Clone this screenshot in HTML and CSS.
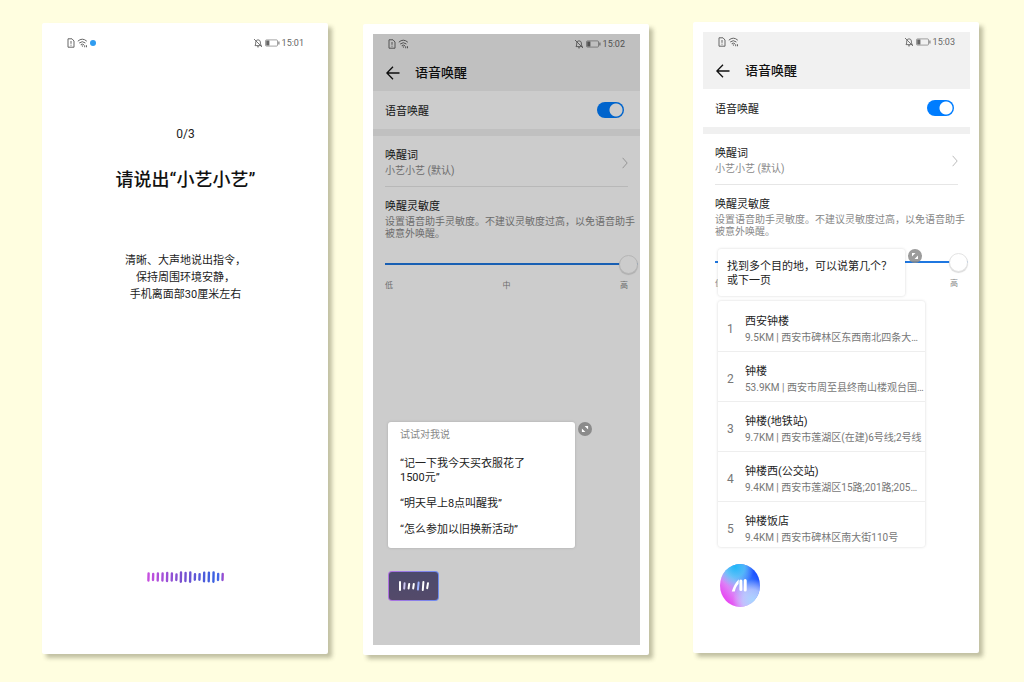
FILE: index.html
```html
<!DOCTYPE html>
<html lang="zh-CN">
<head>
<meta charset="utf-8">
<title>语音唤醒</title>
<link rel="stylesheet" href="styles.css">
</head>
<body>
<svg class="defs" aria-hidden="true">
  <defs>
    <symbol id="sim" viewBox="0 0 8 10"><path d="M1 .8h4L7 3v6.2H1z" fill="none" stroke="currentColor"/><path d="M4 3v2.8M4 6.7v1" stroke="currentColor"/></symbol>
    <symbol id="wifi" viewBox="0 0 11 10"><path d="M.8 3.2Q5.3-.8 9.8 3.2M2.2 5Q5.3 2.4 8.4 5M3.7 6.7Q5.3 5.4 6.9 6.7" fill="none" stroke="currentColor"/><path d="M4.4 7.6h2L5.4 9zM7.2 7.2h1v2h-1zM9 7.2h1v2H9z" fill="currentColor"/></symbol>
    <symbol id="mute" viewBox="0 0 10 10"><path d="M2 7.6h6.4L7.4 6V4Q7.2 1.9 5 1.8 2.8 2 2.7 4v2zM4 8.8h2M1 1l8 8" fill="none" stroke="currentColor" stroke-width=".9"/></symbol>
    <symbol id="battery" viewBox="0 0 15 8"><rect x=".5" y=".9" width="12" height="6.2" rx="1" fill="none" stroke="currentColor" stroke-width=".6"/><path d="M1.2 1.5h3.2v5H1.2zM13.4 2.4h1v3.2h-1z" fill="currentColor"/></symbol>
    <symbol id="back" viewBox="0 0 14 14"><path d="M13.5 7H1M7 .8L.9 7 7 13.2" fill="none" stroke="currentColor" stroke-width="1.3"/></symbol>
    <symbol id="expand" viewBox="0 0 14 14"><circle cx="7" cy="7" r="7" fill="#8b8b8b"/><path d="M6.6 4h3.5v3.5zM7.4 10H3.9V6.5z" fill="#fff"/><path d="M4.6 4.6l4.8 4.8" stroke="#8b8b8b" stroke-width=".8"/></symbol>
    <linearGradient id="spectrum" gradientUnits="userSpaceOnUse" x1="0" y1="0" x2="77" y2="0"><stop offset="0" stop-color="#c94fe0"/><stop offset=".45" stop-color="#7a50d0"/><stop offset=".85" stop-color="#3c60e0"/><stop offset=".94" stop-color="#4668e8"/><stop offset="1" stop-color="#b045c8"/></linearGradient>
    <linearGradient id="orb-base" x1=".85" y1=".2" x2=".1" y2=".85"><stop offset="0" stop-color="#1d52ff"/><stop offset=".25" stop-color="#3a7cff"/><stop offset=".5" stop-color="#a3a8fa"/><stop offset=".72" stop-color="#dd80f6"/><stop offset="1" stop-color="#ea3df2"/></linearGradient>
    <radialGradient id="orb-cyan" cx=".38" cy=".06" r=".48"><stop offset="0" stop-color="#20b8f8"/><stop offset=".5" stop-color="#58c8f8" stop-opacity=".8"/><stop offset="1" stop-color="#8ccdfa" stop-opacity="0"/></radialGradient>
    <radialGradient id="orb-glow" cx=".82" cy=".85" r=".5"><stop offset="0" stop-color="#a8d4ff"/><stop offset=".5" stop-color="#c0ccff" stop-opacity=".8"/><stop offset="1" stop-color="#d0c8ff" stop-opacity="0"/></radialGradient>
  </defs>
</svg>

<main class="stage">
  <section class="panel panel-first">
    <div class="screen">
      <div class="status">
        <svg class="i-sim"><use href="#sim"/></svg>
        <svg class="i-wifi"><use href="#wifi"/></svg>
        <span class="dot"></span>
        <svg class="i-mute"><use href="#mute"/></svg>
        <svg class="i-battery"><use href="#battery"/></svg>
        <time>15:01</time>
      </div>
      <div class="training">
        <p class="progress">0/3</p>
        <h1 class="prompt">请说出“小艺小艺”</h1>
        <p class="advice">清晰、大声地说出指令，<br>保持周围环境安静，<br>手机离面部30厘米左右</p>
      </div>
      <svg class="wave" viewBox="0 0 77 12" fill="none" stroke="url(#spectrum)" stroke-width="2.4" stroke-linecap="round">
        <path d="M1.6 2.5l-.2 7M6.2 3l-.2 6M10.9 2.5l-.2 7M15.6 2.5l-.2 7M20.2 2l-.2 8M24.9 2.5l-.2 7M29.5 3.5l-.2 5.5M34 1.4l-.2 9.4M38.6 2l-.2 8M43.3 1.4l-.2 9.4M48 3.2l-.2 5.6M52.6 3.2l-.2 5.6M57.2 1.8l-.2 8.4M61.9 1.8l-.2 8.4M66.6 1.4l-.2 9.4M71.2 3l-.2 6M75.7 3l-.2 6"/>
      </svg>
    </div>
  </section>

  <section class="panel panel-second">
    <div class="screen dimmed">
      <header class="top">
        <div class="status">
          <svg class="i-sim"><use href="#sim"/></svg>
          <svg class="i-wifi"><use href="#wifi"/></svg>
          <svg class="i-mute"><use href="#mute"/></svg>
          <svg class="i-battery"><use href="#battery"/></svg>
          <time>15:02</time>
        </div>
        <div class="titlebar">
          <button class="back" aria-label="返回"><svg><use href="#back"/></svg></button>
          <h2>语音唤醒</h2>
        </div>
      </header>
      <div class="toggle-row">
        <label for="wake-a">语音唤醒</label>
        <input class="switch" type="checkbox" id="wake-a" checked>
      </div>
      <div class="settings">
        <a class="entry" href="#word">
          <span><strong>唤醒词</strong><small>小艺小艺 (默认)</small></span>
          <svg class="chevron" viewBox="0 0 6 12"><path d="M.6.8L5.2 6 .6 11.2" fill="none" stroke="#bbb"/></svg>
        </a>
        <label class="sense" for="sense-a"><strong>唤醒灵敏度</strong><small>设置语音助手灵敏度。不建议灵敏度过高，以免语音助手被意外唤醒。</small></label>
        <input class="slider" type="range" id="sense-a" min="0" max="2" value="2">
        <div class="scale"><span>低</span><span>中</span><span>高</span></div>
      </div>
      <aside class="assistant listening">
        <div class="bubble-row">
          <div class="bubble tips">
            <p class="hint">试试对我说</p>
            <p>“记一下我今天买衣服花了<br>1500元”</p>
            <p>“明天早上8点叫醒我”</p>
            <p>“怎么参加以旧换新活动”</p>
          </div>
          <button class="expand" aria-label="展开"><svg><use href="#expand"/></svg></button>
        </div>
        <button class="chip" aria-label="正在聆听">
          <svg viewBox="0 0 32 12" fill="none" stroke="#fff" stroke-width="2" stroke-linecap="round"><path d="M2 2v8M11.2 4l-.6 4.4M15.8 4l-.6 4.4M25.4 2l-.6 8M30 3.2l-.8 5"/><path d="M6.6 3.2l-.4 5.4" stroke="#c9c4f0"/><path d="M20.6 2.6l-.7 7" stroke="#9fb4ff"/></svg>
        </button>
      </aside>
    </div>
  </section>

  <section class="panel panel-third">
    <div class="screen">
      <header class="top">
        <div class="status">
          <svg class="i-sim"><use href="#sim"/></svg>
          <svg class="i-wifi"><use href="#wifi"/></svg>
          <svg class="i-mute"><use href="#mute"/></svg>
          <svg class="i-battery"><use href="#battery"/></svg>
          <time>15:03</time>
        </div>
        <div class="titlebar">
          <button class="back" aria-label="返回"><svg><use href="#back"/></svg></button>
          <h2>语音唤醒</h2>
        </div>
      </header>
      <div class="toggle-row">
        <label for="wake-b">语音唤醒</label>
        <input class="switch" type="checkbox" id="wake-b" checked>
      </div>
      <div class="settings">
        <a class="entry" href="#word">
          <span><strong>唤醒词</strong><small>小艺小艺 (默认)</small></span>
          <svg class="chevron" viewBox="0 0 6 12"><path d="M.6.8L5.2 6 .6 11.2" fill="none" stroke="#bbb"/></svg>
        </a>
        <label class="sense" for="sense-b"><strong>唤醒灵敏度</strong><small>设置语音助手灵敏度。不建议灵敏度过高，以免语音助手被意外唤醒。</small></label>
        <input class="slider" type="range" id="sense-b" min="0" max="2" value="2">
        <div class="scale"><span>低</span><span></span><span>高</span></div>
      </div>
      <aside class="assistant results">
        <div class="bubble-row">
          <p class="bubble question">找到多个目的地，可以说第几个？<br>或下一页</p>
          <button class="expand faded" aria-label="展开"><svg><use href="#expand"/></svg></button>
        </div>
        <ol class="places">
          <li><span class="num">1</span><div><strong>西安钟楼</strong><small>9.5KM | 西安市碑林区东西南北四条大…</small></div></li>
          <li><span class="num">2</span><div><strong>钟楼</strong><small>53.9KM | 西安市周至县终南山楼观台国…</small></div></li>
          <li><span class="num">3</span><div><strong>钟楼(地铁站)</strong><small>9.7KM | 西安市莲湖区(在建)6号线;2号线</small></div></li>
          <li><span class="num">4</span><div><strong>钟楼西(公交站)</strong><small>9.4KM | 西安市莲湖区15路;201路;205…</small></div></li>
          <li><span class="num">5</span><div><strong>钟楼饭店</strong><small>9.4KM | 西安市碑林区南大街110号</small></div></li>
        </ol>
        <button class="orb" aria-label="语音助手">
          <svg viewBox="0 0 40 43">
            <ellipse cx="20" cy="21.5" rx="20" ry="21.5" fill="url(#orb-base)"/>
            <ellipse cx="20" cy="21.5" rx="20" ry="21.5" fill="url(#orb-glow)"/>
            <ellipse cx="20" cy="21.5" rx="20" ry="21.5" fill="url(#orb-cyan)"/>
            <path d="M11.8 27.5Q14 20 18.8 15.2L18.6 20Q16 22 14.8 27.5z" fill="#fff"/>
            <path d="M20.9 17v8.5M25.2 16.5v9.5" stroke="#fff" stroke-width="3" stroke-linecap="round"/>
          </svg>
        </button>
      </aside>
    </div>
  </section>
</main>
</body>
</html>
```
FILE: styles.css
```css
* {
  box-sizing: border-box;
}

body {
  margin: 0;
  background: #fffee0;
  color: #222;
  font: 11px/14px Roboto, "Noto Sans CJK SC", sans-serif;
}

h1, h2, p, ol {
  margin: 0;
  padding: 0;
}

button {
  padding: 0;
  border: 0;
  background: none;
  color: inherit;
}

svg {
  display: block;
}

.defs {
  position: absolute;
  width: 0;
  height: 0;
}

.stage {
  display: flex;
  min-height: 100vh;
  padding: 0 45px 0 42px;
}

/* Framed phone screens */
.panel {
  display: flex;
  flex: 1;
  min-width: 0;
  padding: 10px 9px 10px 10px;
  border-radius: 2px;
  background: #fff;
  box-shadow: 4px 4px 4px rgba(60, 60, 30, .32);
}

.panel-first {
  margin: 23px 0 28px;
}

.panel-second {
  margin: 24px 0 27px 35px;
}

.panel-third {
  margin: 22px 0 29px 44px;
}

.screen {
  position: relative;
  display: flex;
  flex: 1;
  flex-direction: column;
  min-width: 0;
}

.dimmed::after {
  content: "";
  position: absolute;
  inset: 0;
  background: rgba(0, 0, 0, .2);
  pointer-events: none;
}

.status {
  display: flex;
  align-items: center;
  gap: 2px;
  height: 20px;
  padding: 0 15px 0 15px;
  color: #666;
  font-size: 9px;
}

.i-sim {
  width: 8px;
  height: 10px;
}

.i-wifi {
  width: 11px;
  height: 10px;
}

.dot {
  width: 6px;
  height: 6px;
  border-radius: 50%;
  background: #2f9cf0;
}

.i-mute {
  width: 10px;
  height: 10px;
  margin-left: auto;
}

.i-battery {
  width: 15px;
  height: 8px;
}

/* Voice training */
.training {
  padding-top: 72px;
  text-align: center;
}

.progress {
  font-size: 12px;
  line-height: 18px;
}

.prompt {
  margin-top: 24px;
  color: #111;
  font-size: 18px;
  font-weight: 500;
  line-height: 26px;
}

.advice {
  margin-top: 59px;
  line-height: 17px;
}

.wave {
  width: 77px;
  height: 12px;
  margin: auto auto 61px;
}

/* Settings */
.top {
  background: #f1f1f1;
}

.titlebar {
  display: flex;
  align-items: center;
  gap: 15px;
  height: 37px;
  padding: 0 13px;
  color: #111;
}

.back svg {
  width: 14px;
  height: 14px;
}

.titlebar h2 {
  font-size: 13px;
  font-weight: 500;
  line-height: 18px;
}

.toggle-row {
  display: flex;
  align-items: center;
  justify-content: space-between;
  height: 45px;
  padding: 0 16px 0 12px;
  border-bottom: 7px solid #f0f0f0;
}

.toggle-row label {
  padding-top: 3px;
}

.switch {
  width: 27px;
  height: 16px;
  margin: 0;
  border-radius: 8px;
  appearance: none;
  background: radial-gradient(circle at 19px 8px, #fff 6px, transparent 7px) #007dff;
}

.settings {
  padding: 0 12px;
}

.entry {
  display: flex;
  align-items: center;
  justify-content: space-between;
  padding: 12px 0 8px;
  border-bottom: 1px solid #e6e6e6;
  color: inherit;
  text-decoration: none;
}

.settings strong, .settings small {
  display: block;
}

.settings strong {
  font-weight: 400;
  line-height: 16px;
}

.settings small {
  color: #888;
  font-size: 10px;
  line-height: 14px;
}

.chevron {
  width: 6px;
  height: 12px;
}

.sense {
  display: block;
  margin-right: -10px;
  padding-top: 11px;
}

.settings .sense strong {
  line-height: 18px;
}

.settings .sense small {
  line-height: 12px;
}

.slider {
  display: block;
  width: calc(100% + 10px);
  height: 20px;
  margin: 14px 0 0;
  appearance: none;
  background: linear-gradient(#1f77e0, #1f77e0) center / 100% 2px no-repeat;
}

.slider::-webkit-slider-thumb {
  width: 19px;
  height: 19px;
  border: 1px solid #e4e4e4;
  border-radius: 50%;
  appearance: none;
  background: #fff;
  box-shadow: 0 1px 1px rgba(0, 0, 0, .15);
}

.scale {
  display: flex;
  justify-content: space-between;
  margin-top: 6px;
  color: #888;
  font-size: 8px;
  line-height: 12px;
}

/* Assistant layer floating over the settings */
.assistant {
  position: absolute;
  z-index: 1;
  left: 15px;
  display: flex;
  flex-direction: column;
}

.listening {
  bottom: 44px;
  gap: 23px;
}

.results {
  bottom: 36px;
}

.bubble-row {
  display: flex;
  align-items: flex-start;
  gap: 3px;
}

.bubble {
  width: 187px;
  border-radius: 3px;
  background: #fff;
  box-shadow: 0 0 3px rgba(0, 0, 0, .16);
}

.tips {
  display: grid;
  gap: 12px;
  padding: 6px 12px 11px;
}

.tips .hint {
  margin-bottom: 3px;
  color: #888;
  font-size: 10px;
}

.question {
  padding: 11px 0 8px 9px;
}

.expand svg {
  width: 14px;
  height: 14px;
}

.faded {
  opacity: .85;
}

.faded svg {
  transform: rotate(90deg);
}

.chip {
  display: grid;
  place-items: center;
  width: 51px;
  height: 30px;
  border: 1px solid transparent;
  border-radius: 4px;
  background: linear-gradient(#4c4a6c, #544a6a) padding-box, linear-gradient(90deg, #b070e0, #6c8cf0) border-box;
}

.chip svg {
  width: 32px;
  height: 12px;
}

.places {
  width: 207px;
  height: 246px;
  margin-top: 5px;
  padding-top: 1px;
  overflow: hidden;
  border-radius: 3px;
  background: #fff;
  box-shadow: 0 0 3px rgba(0, 0, 0, .16);
  list-style: none;
}

.places li {
  display: grid;
  grid-template-columns: 27px 1fr;
  height: 50px;
  padding-top: 13px;
  border-bottom: 1px solid #eee;
}

.places li:last-child {
  border-bottom: 0;
}

.num {
  padding-left: 9px;
  color: #777;
  font-size: 12px;
  line-height: 28px;
}

.places strong, .places small {
  display: block;
  white-space: nowrap;
}

.places strong {
  font-weight: 400;
}

.places small {
  color: #777;
  font-size: 10px;
  line-height: 18px;
}

.orb {
  width: 40px;
  height: 43px;
  margin: 17px 0 0 2px;
}

.orb svg {
  width: 40px;
  height: 43px;
}
```
